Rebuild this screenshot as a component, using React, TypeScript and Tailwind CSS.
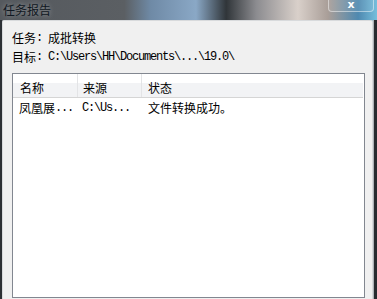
const cjk = "block font-['Noto_Sans_CJK_SC',sans-serif] text-[12px] leading-[16px]";
const mono = "block font-['Liberation_Mono','Noto_Sans_CJK_SC',monospace] text-[12px] leading-[16px] tracking-[-1.2px] whitespace-pre";

const M = ({ children }: { children: string }) => <span className={mono}>{children}</span>;
const C = ({ children }: { children: string }) => <span className={cjk}>{children}</span>;

const Line = ({ children, className = "" }: { children: React.ReactNode; className?: string }) => (
  <div className={"flex items-center h-[16px] " + className}>{children}</div>
);

const App = () => {
  return (
    <div className="w-[377px] h-[299px] overflow-hidden flex flex-col bg-[linear-gradient(90deg,#55595e_0%,#5b5f63_33%,#6f8aa6_40%,#8aa8c6_52%,#303539_60%,#8c8c90_68%,#d9d0ca_79%,#a99e98_87%,#4f89b0_95%,#76bedc_100%)] text-black">
      {/* title bar */}
      <div className="relative h-[20px] shrink-0">
        <span className="absolute left-[3px] top-[2px] font-['Noto_Sans_CJK_SC',sans-serif] text-[12px] leading-[16px] text-[#101822] [text-shadow:0_0_5px_rgba(255,255,255,0.45)]">
          任务报告
        </span>
        <div className="absolute left-[328px] top-[-8px] w-[46px] h-[20px] rounded-[4px] border border-[rgba(255,255,255,0.45)] bg-[rgba(255,255,255,0.08)] flex justify-center">
          <span className="mt-[6px] font-['DejaVu_Sans',sans-serif] text-[11px] leading-[11px] font-bold text-white">x</span>
        </div>
      </div>

      <div className="flex flex-1 min-h-0">
        <div className="w-[2px] bg-[#2c3034]" />
        <div className="flex-1 bg-[#f0f0f0] border-t border-l border-r border-[#d8dadc] rounded-tl-[2px] rounded-tr-[2px] pl-[9px] pt-[9px]">
          <Line>
            <C>任务</C>
            <M>: </M>
            <C>成批转换</C>
          </Line>
          <Line className="mt-[3px]">
            <C>目标</C>
            <M>{": C:\\Users\\HH\\Documents\\...\\19.0\\"}</M>
          </Line>

          {/* list view */}
          <div className="mt-[8px] w-[353px] h-[225px] border border-[#828790] bg-white">
            <div className="flex h-[24px] mr-[1px] border-b border-[#d5d5d5] bg-[linear-gradient(to_bottom,#ffffff_0%,#ffffff_38%,#f2f3f5_38%,#f2f3f5_100%)]">
              <div className="w-[65px] border-r border-[#e3e4e6] pl-[7px] pt-[6px]">
                <Line><C>名称</C></Line>
              </div>
              <div className="w-[64px] border-r border-[#e3e4e6] pl-[5px] pt-[6px]">
                <Line><C>来源</C></Line>
              </div>
              <div className="flex-1 pl-[6px] pt-[6px]">
                <Line><C>状态</C></Line>
              </div>
            </div>
            <div className="flex mt-[2px]">
              <Line className="w-[65px] pl-[6px]">
                <C>凤凰展</C>
                <M>...</M>
              </Line>
              <Line className="w-[64px] pl-[4px]">
                <M>{"C:\\Us..."}</M>
              </Line>
              <Line className="flex-1 pl-[6px]">
                <C>文件转换成功。</C>
              </Line>
            </div>
          </div>
        </div>
        <div className="w-[1px] bg-[#aeb2b6]" />
        <div className="w-[3px] bg-[#272b2f]" />
      </div>
    </div>
  );
};

export default App;
